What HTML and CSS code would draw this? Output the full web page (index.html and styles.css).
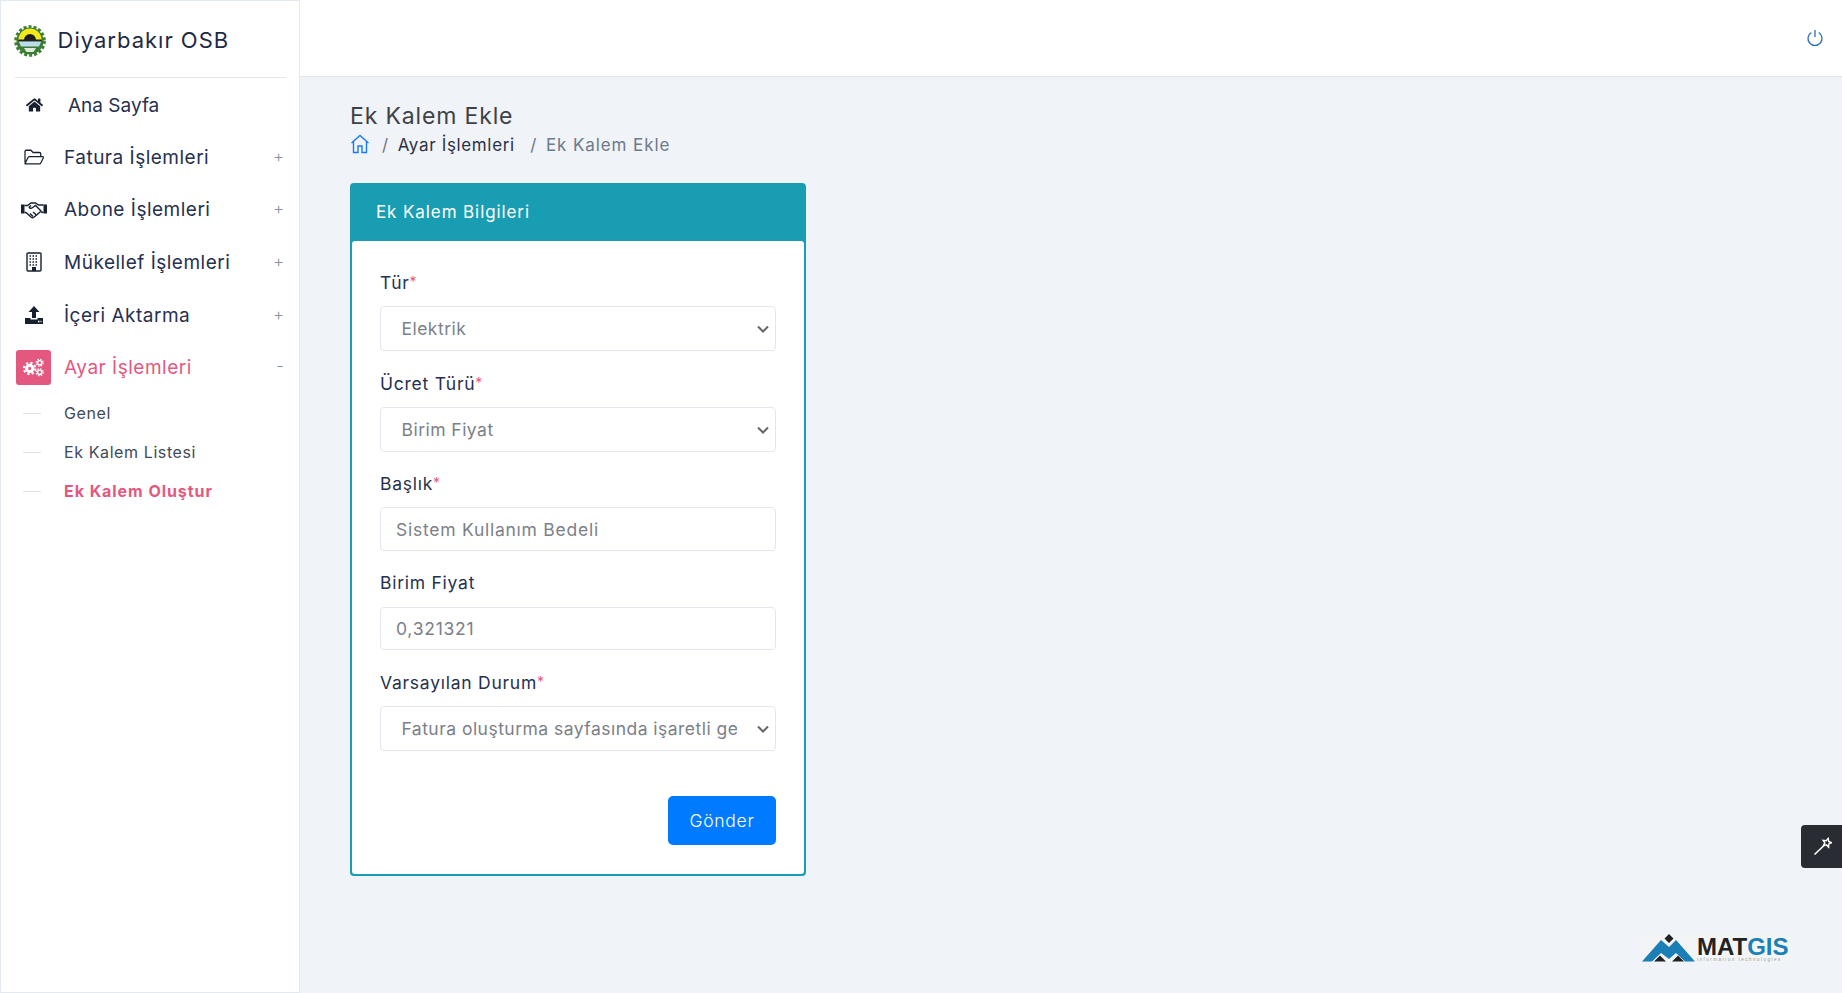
FILE: index.html
```html
<!DOCTYPE html>
<html lang="tr">
<head>
<meta charset="utf-8">
<title>Ek Kalem Ekle</title>
<link rel="stylesheet" href="styles.css">
</head>
<body>
<aside class="sidebar">
  <div class="brand">
    <svg class="brand-logo" viewBox="0 0 32 32">
      <circle cx="16" cy="16" r="14.200" fill="none" stroke="#3f7f35" stroke-width="3.200" stroke-dasharray="3 2"/>
      <circle cx="16" cy="16" r="13.500" fill="#3c7d33"/>
      <path d="M4.500 15a11.500 11.500 0 0 1 23 0z" fill="#f2e71c"/>
      <path d="M10 15a6 6 0 0 1 12 0z" fill="#1c1c1c"/>
      <rect x="4.500" y="14.500" width="23" height="2" fill="#222"/>
      <path d="M4.800 16.500h22.400l-2.200 5H7z" fill="#bcdcec"/>
      <path d="M10 23h12l-2.500 4h-7z" fill="#dfeadb"/>
    </svg>
    <span class="brand-name">Diyarbakır OSB</span>
  </div>
  <nav class="menu">
    <a class="item item-home">
      <span class="ico"><svg class="i-home" viewBox="0 0 576 512"><path d="M280.37 148.26L96 300.11V464a16 16 0 0 0 16 16l112.06-.29a16 16 0 0 0 15.92-16V368a16 16 0 0 1 16-16h64a16 16 0 0 1 16 16v95.64a16 16 0 0 0 16 16.05L464 480a16 16 0 0 0 16-16V300L295.67 148.26a12.19 12.19 0 0 0-15.3 0zM571.6 251.47L488 182.56V44.05a12 12 0 0 0-12-12h-56a12 12 0 0 0-12 12v72.61L318.47 43a48 48 0 0 0-61 0L4.34 251.47a12 12 0 0 0-1.6 16.9l25.5 31A12 12 0 0 0 45.15 301l235.22-193.74a12.19 12.19 0 0 1 15.3 0L530.9 301a12 12 0 0 0 16.9-1.6l25.5-31a12 12 0 0 0-1.7-16.93z"/></svg></span>
      <span class="label">Ana Sayfa</span>
    </a>
    <a class="item">
      <span class="ico"><svg class="i-folder" viewBox="0 0 24 20"><path d="M2 16V4a1.500 1.500 0 0 1 1.500-1.500h5l2.500 2.500h7a1.500 1.500 0 0 1 1.500 1.500V9M2 17.500l3.500-7.200a1.500 1.500 0 0 1 1.300-.8h14.700a1 1 0 0 1 .9 1.400l-3 6a1.500 1.500 0 0 1-1.300.8H3a1 1 0 0 1-1-.2z"/></svg></span>
      <span class="label">Fatura İşlemleri</span><span class="sign">+</span>
    </a>
    <a class="item">
      <span class="ico"><svg class="i-hands" viewBox="0 0 26 18"><path class="fill" d="M0 3.500h3.500v9H0zM22.500 3.500H26v9h-3.500z"/><path d="M3.500 4.500h3l3.500-2.500h4.500l3 2h5M3.500 11.500h1.500l5 4.500c1 .8 2.500.7 3.200-.1l5.300-4.400 1.500-1.500-5.500-5.500-3.500 2.500c-1 .6-2.500.3-2.800-.8L10 4.500"/><path d="M20 11l2.500.5M9 12.500l3 3M12 11l3.500 3"/></svg></span>
      <span class="label">Abone İşlemleri</span><span class="sign">+</span>
    </a>
    <a class="item">
      <span class="ico"><svg class="i-building" viewBox="0 0 16 20"><rect x="1" y="1" width="14" height="18" rx="1"/><rect class="fill" x="6" y="15" width="4" height="4"/><path class="dots" d="M3.500 4h9M3.500 7h9M3.500 10h9M3.500 13h9"/></svg></span>
      <span class="label">Mükellef İşlemleri</span><span class="sign">+</span>
    </a>
    <a class="item">
      <span class="ico"><svg class="i-upload" viewBox="0 0 18 18"><path class="fill" d="M9 0l5.500 6H11v6H7V6H3.500zM0 12h5.500v1.500h7V12H18v6H0z"/><path class="cut" d="M13 15.500h1.500M15.500 15.500h1"/></svg></span>
      <span class="label">İçeri Aktarma</span><span class="sign">+</span>
    </a>
    <a class="item item-active">
      <span class="ico ico-active"><svg class="i-cogs" viewBox="0 0 24 20">
        <circle class="big-teeth" cx="8" cy="11" r="6"/><circle class="big-ring" cx="8" cy="11" r="3.300"/>
        <circle class="small-teeth" cx="18.500" cy="5" r="3.600"/><circle class="small-ring" cx="18.500" cy="5" r="2.200"/>
        <circle class="small-teeth" cx="18.500" cy="15" r="3.600"/><circle class="small-ring" cx="18.500" cy="15" r="2.200"/>
      </svg></span>
      <span class="label">Ayar İşlemleri</span><span class="sign sign-minus">-</span>
    </a>
    <ul class="submenu">
      <li class="sub"><span class="dash"></span>Genel</li>
      <li class="sub"><span class="dash"></span>Ek Kalem Listesi</li>
      <li class="sub sub-active"><span class="dash"></span>Ek Kalem Oluştur</li>
    </ul>
  </nav>
</aside>
<div class="main">
  <header class="topbar">
    <svg class="power" viewBox="0 0 18 18"><path d="M5.300 3.500a7 7 0 1 0 7.400 0M9 1v7"/></svg>
  </header>
  <section class="content">
    <h1 class="page-title">Ek Kalem Ekle</h1>
    <div class="crumbs">
      <svg class="crumb-home" viewBox="0 0 20 20"><path d="M1.500 9L10 1.500 18.500 9M3.500 7.500V18.500h4.500v-6.500h4v6.500h4.500V7.500"/></svg>
      <span class="sep">/</span>
      <span class="crumb">Ayar İşlemleri</span>
      <span class="sep">/</span>
      <span class="crumb-now">Ek Kalem Ekle</span>
    </div>
    <div class="card">
      <div class="card-head">Ek Kalem Bilgileri</div>
      <form class="card-body">
        <div class="field">
          <label class="lbl">Tür<em>*</em></label>
          <select class="ctl sel"><option>Elektrik</option></select>
        </div>
        <div class="field field-tight">
          <label class="lbl">Ücret Türü<em>*</em></label>
          <select class="ctl sel"><option>Birim Fiyat</option></select>
        </div>
        <div class="field">
          <label class="lbl">Başlık<em>*</em></label>
          <input class="ctl inp" value="Sistem Kullanım Bedeli">
        </div>
        <div class="field">
          <label class="lbl">Birim Fiyat</label>
          <input class="ctl inp inp-sm" value="0,321321">
        </div>
        <div class="field">
          <label class="lbl">Varsayılan Durum<em>*</em></label>
          <select class="ctl sel"><option>Fatura oluşturma sayfasında işaretli gelsin</option></select>
        </div>
        <div class="actions"><button type="button" class="btn">Gönder</button></div>
      </form>
    </div>
  </section>
</div>
<div class="tool">
  <svg viewBox="0 0 20 20"><path class="wand" d="M2.500 17.500L12 8.500"/><path class="star" d="M16.200 1.400L16.700 4.400 19.600 5.600 16.850 7 16.600 10.100 14.400 7.900 11.400 8.700 12.800 5.900 11.100 3.300 14.200 3.750Z"/></svg>
</div>
<svg class="matgis" viewBox="0 0 150 28">
  <rect width="150" height="28" fill="#f3f4f5"/>
  <path d="M0 27.500L19 6l8 7 7-7 19 21.500H43L34 19l-7 6-8-6-9 8.500z" fill="#1b7fb6"/>
  <path d="M27 0l4.500 4.500L27 9l-4.500-4.500zM12 27.500l6-6 6 6zM30 27.500l6-6 6 6z" fill="#222"/>
  <text class="mat" x="55" y="21">MAT<tspan class="gis">GIS</tspan></text>
  <text class="tech" x="55" y="27">information technologies</text>
</svg>
</body>
</html>
```
FILE: styles.css
```css
* { box-sizing: border-box; }
html { overflow: hidden; }
html, body { height: 100%; }
body {
  margin: 0;
  height: 993px;
  overflow: hidden;
  display: flex;
  background: #f0f3f7;
  font-family: Inter, "Noto Sans", sans-serif;
  color: #1f2a44;
}
.sidebar {
  width: 300px;
  flex: none;
  background: #fff;
  border: 1px solid #e3e9f0;
  padding: 0 13px 0 14px;
}
.brand {
  height: 77px;
  display: flex;
  align-items: center;
  gap: 11.500px;
  border-bottom: 1px solid #e3e6ea;
}
.brand-logo { width: 32px; height: 32px; margin: 4px 0 0 -1px; }
.brand-name { font-size: 22px; letter-spacing: 1px; color: #1f2a44; margin-top: 2px; }
.menu { display: flex; flex-direction: column; }
.item {
  height: 52.6px;
  display: flex;
  align-items: center;
  font-size: 19px;
  letter-spacing: .5px;
  color: #26304f;
}
.ico { width: 49px; flex: none; display: flex; justify-content: center; align-items: center; height: 35px; padding-right: 11px; }
.ico svg { display: block; fill: none; stroke: #17202f; stroke-width: 1.4; }
.ico .fill { fill: #17202f; stroke: none; }
.i-home { width: 17px; height: 16px; fill: #17202f !important; stroke: none !important; }
.i-folder { width: 22px; height: 18px; }
.i-hands { width: 26px; height: 18px; }
.i-building { width: 16px; height: 20px; }
.i-building .dots { stroke-dasharray: 1.5 1.5; }
.i-upload { width: 18px; height: 18px; }
.i-upload .cut { stroke: #fff; }
.item-home { height: 52px; margin-top: 1px; letter-spacing: 0; }
.item-home .label { margin-left: 4px; }
.label { flex: 1; }
.sign { font-size: 17px; font-weight: 300; color: #8a93a3; width: 14px; text-align: right; margin: -3px 2px 0 0; letter-spacing: 0; }
.item-active, .item-active .label { color: #e4587f; }
.ico-active { width: 35px; height: 35px; margin: 0 13px 0 1px; padding: 0; background: #e4587f; border-radius: 3px; }
.ico .i-cogs { width: 23px; height: 19px; stroke: #fff; fill: none; }
.big-teeth { stroke-width: 2.200; stroke-dasharray: 2.400 2.300; }
.big-ring { stroke-width: 3.200; }
.small-teeth { stroke-width: 1.400; stroke-dasharray: 1.500 1.330; }
.small-ring { stroke-width: 1.500; }
.submenu { list-style: none; margin: -1px 0 0; padding: 0; }
.sub {
  height: 39.200px;
  display: flex;
  align-items: center;
  font-size: 16px;
  color: #3f4a5a;
  letter-spacing: .6px;
}
.dash { width: 18px; height: 1px; margin: 2px 23px 0 8px; background: #dfe3e8; }
.sub-active { color: #e4587f; font-weight: 700; letter-spacing: .95px; }
.main { flex: 1; display: flex; flex-direction: column; min-width: 0; }
.topbar {
  height: 77px;
  flex: none;
  background: #fff;
  border-bottom: 1px solid #e3e6ea;
  display: flex;
  align-items: center;
  justify-content: flex-end;
  padding: 0 18px 0 0;
}
.power { width: 18px; height: 18px; fill: none; stroke: #2f6fb8; stroke-width: 1.300; }
.content { padding: 24px 50px 0; }
.page-title { margin: 0; font-size: 23px; font-weight: 400; line-height: 30px; color: #3e4247; letter-spacing: .85px; }
.crumbs { display: flex; align-items: center; height: 26px; margin-top: 1px; font-size: 17px; letter-spacing: .65px; }
.crumb-home { width: 20px; height: 20px; margin: -2px -1px 0 0; fill: none; stroke: #1a7cf0; stroke-width: 1.400; }
.sep { color: #6c7788; margin: 0 9.500px 0 13px; letter-spacing: 0; }
.crumb { color: #2a3248; margin-right: 2.500px; }
.crumb-now { color: #6c7a8c; letter-spacing: .9px; }
.card {
  width: 456px;
  height: 693px;
  margin-top: 25px;
  background: #189db3;
  border-radius: 4px;
  padding: 0 2px 2px;
  display: flex;
  flex-direction: column;
}
.card-head { height: 58px; flex: none; padding-left: 24px; display: flex; align-items: center; color: #fff; font-size: 17px; letter-spacing: .9px; }
.card-body { flex: 1; background: #fff; border-radius: 3px; padding: 30px 28px 0; display: flex; flex-direction: column; }
.field { display: flex; flex-direction: column; margin-bottom: 21px; }
.field-tight { margin-bottom: 20px; }
.lbl { height: 23px; margin-bottom: 12px; font-size: 17.500px; line-height: 22px; letter-spacing: .75px; color: #26304f; }
.lbl em { color: #e4587f; font-style: normal; font-size: 14px; vertical-align: 2px; }
.ctl {
  width: 100%;
  background: #fff;
  border: 1px solid #e3e8ef;
  border-radius: 4px;
  font: inherit;
  font-size: 17.500px;
  color: #7b8088;
  outline: none;
}
.sel {
  height: 45px;
  padding: 0 38px 0 20.500px;
  letter-spacing: .47px;
  appearance: none;
  -webkit-appearance: none;
  background: #fff url("data:image/svg+xml,%3Csvg xmlns='http://www.w3.org/2000/svg' viewBox='0 0 12 8'%3E%3Cpath d='M1 1.500l5 5 5-5' fill='none' stroke='%23666' stroke-width='2'/%3E%3C/svg%3E") no-repeat right 6px center / 12px 8px;
}
.inp { height: 44px; padding: 0 15px; letter-spacing: .75px; }
.inp-sm { height: 43px; }
.actions { display: flex; justify-content: flex-end; margin-top: 24px; }
.btn {
  width: 108px;
  height: 49px;
  border: none;
  border-radius: 5px;
  background: #007bff;
  color: #fff;
  font: inherit;
  font-size: 17.500px;
  font-weight: 300;
  letter-spacing: .7px;
}
.tool {
  position: absolute;
  right: 0;
  top: 825px;
  width: 41px;
  height: 43px;
  background: #292d33;
  border-radius: 4px 0 0 4px;
  display: flex;
  align-items: center;
  justify-content: center;
}
.tool svg { width: 20px; height: 20px; fill: none; stroke: #fff; }
.tool .wand { stroke-width: 1.600; }
.tool .star { stroke-width: 1.400; }
.matgis { position: absolute; left: 1642px; top: 934px; width: 150px; height: 28px; overflow: visible; }
.mat { font-family: "Liberation Sans", sans-serif; font-weight: 700; font-size: 24px; fill: #222; letter-spacing: 0; }
.gis { fill: #1b7fb6; }
.tech { font-family: "Liberation Sans", sans-serif; font-size: 4.500px; fill: #9a9a9a; letter-spacing: 1.500px; }
```
